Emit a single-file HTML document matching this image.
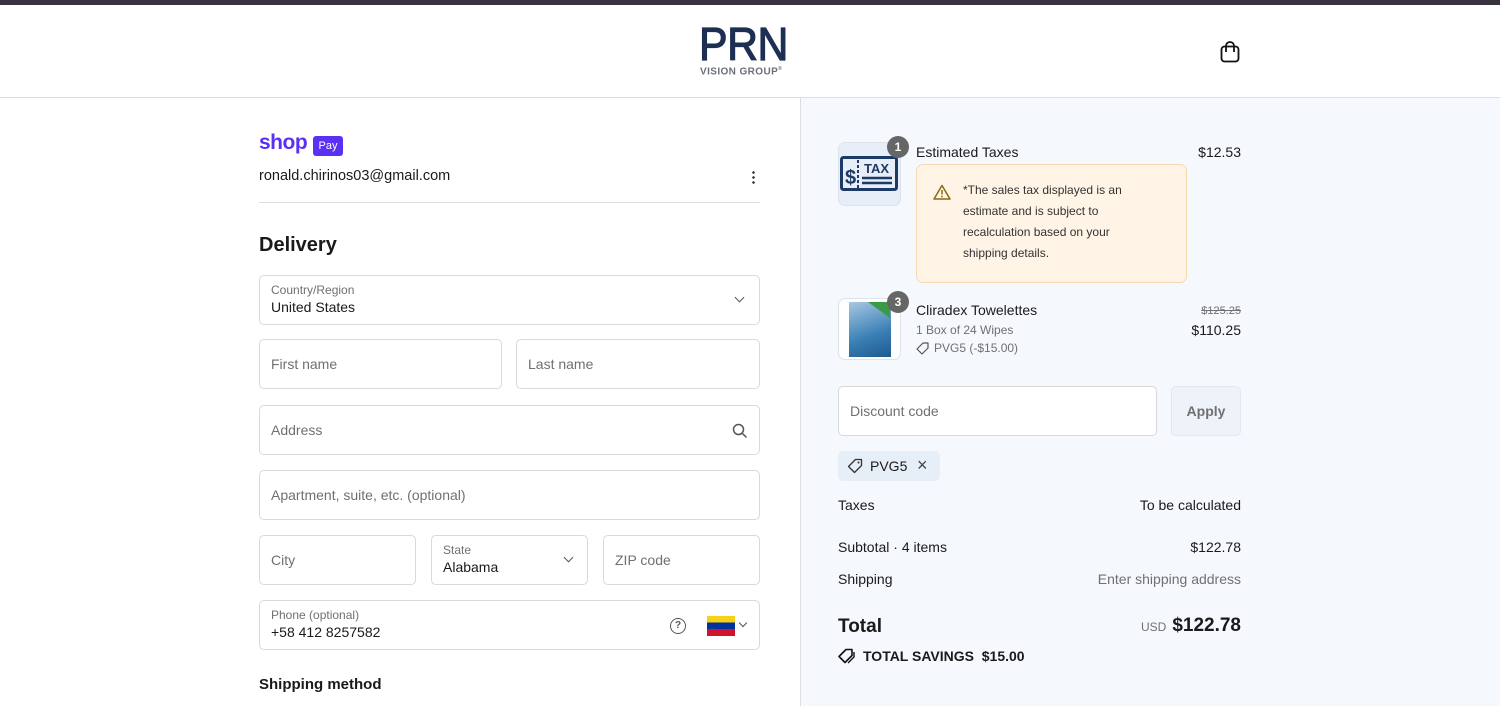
<!DOCTYPE html>
<html><head><meta charset="utf-8"><style>
*{box-sizing:border-box;margin:0;padding:0}
body{width:1500px;height:706px;overflow:hidden;font-family:"Liberation Sans",sans-serif;color:#1a1a1a;background:#fff;position:relative;font-size:14px}
.a{position:absolute}
.top{left:0;top:0;width:1500px;height:5px;background:#39323f}
.hdr{left:0;top:97px;width:1500px;height:1px;background:#dedede}
.right{left:800px;top:98px;width:700px;height:608px;background:#f5f8fc;border-left:1px solid #dedede}
.f{position:absolute;border:1px solid #d9d9d9;border-radius:5px;background:#fff;height:50px}
.ph{position:absolute;left:11px;top:16px;color:#707070;font-size:14px}
.lb{position:absolute;left:11px;top:7px;color:#707070;font-size:12px}
.vl{position:absolute;left:11px;top:23px;font-size:14px;color:#1a1a1a}
.chev{position:absolute;width:7px;height:7px;border-right:1.5px solid #555;border-bottom:1.5px solid #555;transform:rotate(45deg)}
.r{position:absolute;font-size:14px}
.rr{position:absolute;font-size:14px;right:259px;text-align:right}
</style></head><body>
<div class="a top"></div>
<div class="a" style="left:699px;top:22px;font-size:46px;color:#1d2f52;-webkit-text-stroke:1.2px #1d2f52;letter-spacing:-0.5px;line-height:44px;transform:scaleX(0.93);transform-origin:left">PRN</div>
<div class="a" style="left:700px;top:66px;font-size:10px;font-weight:bold;color:#6a6f7a;letter-spacing:0.4px">VISION GROUP<sup style="font-size:5px">®</sup></div>
<svg class="a" style="left:1219px;top:40px" width="22" height="24" viewBox="0 0 22 24"><rect x="2.5" y="6.5" width="17" height="15" rx="3" fill="none" stroke="#111" stroke-width="1.8"/><path d="M7 10V6a4 4 0 0 1 8 0v4" fill="none" stroke="#111" stroke-width="1.8"/><circle cx="7" cy="11" r="1.1" fill="#111"/><circle cx="15" cy="11" r="1.1" fill="#111"/></svg>
<div class="a hdr"></div>
<div class="a right"></div>

<div class="a" style="left:259px;top:131px;font-size:21px;font-weight:bold;color:#5a31f4;letter-spacing:-0.5px">shop</div>
<div class="a" style="left:313px;top:136px;width:30px;height:20px;background:#5a31f4;border-radius:3px;color:#fff;font-size:11px;text-align:center;line-height:20px">Pay</div>
<div class="a" style="left:259px;top:168px;font-size:14.5px">ronald.chirinos03@gmail.com</div>
<div class="a" style="left:752px;top:170px;width:3px;height:14px;background:radial-gradient(circle,#333 1.2px,transparent 1.4px) 0 0/3px 5px"></div>
<div class="a" style="left:259px;top:202px;width:501px;height:1px;background:#dedede"></div>
<div class="a" style="left:259px;top:234px;font-size:20px;font-weight:bold">Delivery</div>

<div class="f" style="left:259px;top:275px;width:501px"><span class="lb">Country/Region</span><span class="vl">United States</span><div class="chev" style="left:476px;top:18px"></div></div>
<div class="f" style="left:259px;top:339px;width:243px"><span class="ph">First name</span></div>
<div class="f" style="left:516px;top:339px;width:244px"><span class="ph">Last name</span></div>
<div class="f" style="left:259px;top:405px;width:501px"><span class="ph">Address</span>
<svg style="position:absolute;left:472px;top:17px" width="16" height="16"><circle cx="6.5" cy="6.5" r="5" fill="none" stroke="#555" stroke-width="1.5"/><path d="M10.5 10.5L14.5 14.5" stroke="#555" stroke-width="1.5"/></svg></div>
<div class="f" style="left:259px;top:470px;width:501px"><span class="ph">Apartment, suite, etc. (optional)</span></div>
<div class="f" style="left:259px;top:535px;width:157px"><span class="ph">City</span></div>
<div class="f" style="left:431px;top:535px;width:157px"><span class="lb">State</span><span class="vl">Alabama</span><div class="chev" style="left:133px;top:18px"></div></div>
<div class="f" style="left:603px;top:535px;width:157px"><span class="ph">ZIP code</span></div>
<div class="f" style="left:259px;top:600px;width:501px"><span class="lb">Phone (optional)</span><span class="vl">+58 412 8257582</span>
<div style="position:absolute;left:410px;top:17px;width:16px;height:16px;border:1.5px solid #555;border-radius:50%;font-size:10px;text-align:center;line-height:13px;color:#555;font-weight:bold">?</div>
<div style="position:absolute;left:447px;top:15px;width:28px;height:20px;background:linear-gradient(#f7d117 0 33%,#0033a0 33% 66%,#cf142b 66%)"></div>
<div class="chev" style="left:480px;top:19px;width:6px;height:6px"></div></div>
<div class="a" style="left:259px;top:676px;font-size:15px;font-weight:bold">Shipping method</div>

<!-- right -->
<div class="a" style="left:838px;top:142px;width:63px;height:64px;border:1px solid #dde3ea;border-radius:7px;background:#e8eef7"></div>
<svg class="a" style="left:840px;top:156px" width="58" height="36" viewBox="0 0 58 36"><rect x="1.5" y="1.5" width="55" height="32" rx="2" fill="none" stroke="#1d3a66" stroke-width="3"/><text x="5" y="28" font-size="20" font-weight="bold" fill="#1d3a66" font-family="Liberation Sans">$</text><text x="24" y="17" font-size="13" font-weight="bold" fill="#1d3a66" font-family="Liberation Sans">TAX</text><path d="M22 22h30M22 27h30" stroke="#1d3a66" stroke-width="2.5"/><path d="M18 4v28" stroke="#1d3a66" stroke-width="2" stroke-dasharray="3 2"/></svg>
<div class="a" style="left:887px;top:136px;width:22px;height:22px;border-radius:50%;background:#666;color:#fff;font-size:12px;font-weight:bold;text-align:center;line-height:22px">1</div>
<div class="r" style="left:916px;top:144px">Estimated Taxes</div>
<div class="rr" style="top:144px">$12.53</div>
<div class="a" style="left:916px;top:164px;width:271px;height:119px;background:#fff4e6;border:1px solid #f7d9ae;border-radius:7px"></div>
<svg class="a" style="left:933px;top:184px" width="18" height="16"><path d="M9 1.5L17 15H1z" fill="none" stroke="#8a6a12" stroke-width="1.5" stroke-linejoin="round"/><path d="M9 6v4.5" stroke="#8a6a12" stroke-width="1.5"/><circle cx="9" cy="12.5" r="0.9" fill="#8a6a12"/></svg>
<div class="a" style="left:963px;top:180px;font-size:12px;line-height:21px;color:#333;width:180px">*The sales tax displayed is an estimate and is subject to recalculation based on your shipping details.</div>

<div class="a" style="left:838px;top:298px;width:63px;height:62px;border:1px solid #dde3ea;border-radius:7px;background:#fff"></div>
<div class="a" style="left:849px;top:302px;width:42px;height:55px;background:linear-gradient(160deg,#a7c8e2,#3a7fb5 60%,#1d5a8e)"></div>
<div class="a" style="left:868px;top:302px;width:22px;height:16px;background:#3a9a45;clip-path:polygon(0 0,100% 0,100% 100%)"></div>
<div class="a" style="left:887px;top:291px;width:22px;height:22px;border-radius:50%;background:#666;color:#fff;font-size:12px;font-weight:bold;text-align:center;line-height:22px">3</div>
<div class="r" style="left:916px;top:302px">Cliradex Towelettes</div>
<div class="a" style="left:916px;top:323px;font-size:12px;color:#707070">1 Box of 24 Wipes</div>
<svg class="a" style="left:916px;top:342px" width="13" height="13"><path d="M7 1H12V6L6 12L1 7Z" fill="none" stroke="#555" stroke-width="1.2" stroke-linejoin="round"/></svg>
<div class="a" style="left:934px;top:341px;font-size:12px;color:#707070">PVG5 (-$15.00)</div>
<div class="rr" style="top:305px;font-size:11px;color:#707070;text-decoration:line-through">$125.25</div>
<div class="rr" style="top:322px">$110.25</div>

<div class="f" style="left:838px;top:386px;width:319px"><span class="ph" style="top:16px">Discount code</span></div>
<div class="a" style="left:1171px;top:386px;width:70px;height:50px;border:1px solid #e2e8ef;border-radius:5px;background:#eef3f9;color:#707070;font-weight:bold;font-size:14px;text-align:center;line-height:48px">Apply</div>
<div class="a" style="left:838px;top:451px;width:102px;height:30px;background:#e6eef8;border-radius:5px"></div>
<svg class="a" style="left:847px;top:458px" width="16" height="16"><path d="M8.5 1.5H14.5V7.5L7.5 14.5L1.5 8.5Z" fill="none" stroke="#333" stroke-width="1.3" stroke-linejoin="round"/><circle cx="11.5" cy="4.5" r="1" fill="#333"/></svg>
<div class="r" style="left:870px;top:458px">PVG5</div>
<div class="a" style="left:917px;top:455px;font-size:18px;color:#444">×</div>

<div class="r" style="left:838px;top:497px">Taxes</div>
<div class="rr" style="top:497px">To be calculated</div>
<div class="r" style="left:838px;top:539px">Subtotal · 4 items</div>
<div class="rr" style="top:539px">$122.78</div>
<div class="r" style="left:838px;top:571px">Shipping</div>
<div class="rr" style="top:571px;color:#707070">Enter shipping address</div>
<div class="a" style="left:838px;top:616px;font-size:19px;font-weight:bold">Total</div>
<div class="rr" style="top:615px;font-size:19px;font-weight:bold"><span style="font-size:12px;color:#707070;font-weight:normal;margin-right:6px">USD</span>$122.78</div>
<svg class="a" style="left:838px;top:648px" width="18" height="16"><path d="M8 1.5H14V7.5L7 14.5L1 8.5Z" fill="none" stroke="#111" stroke-width="1.6" stroke-linejoin="round"/><path d="M16 4V9L10 15" fill="none" stroke="#111" stroke-width="1.4"/></svg>
<div class="a" style="left:863px;top:648px;font-size:14px;font-weight:bold">TOTAL SAVINGS&nbsp; $15.00</div>
</body></html>
